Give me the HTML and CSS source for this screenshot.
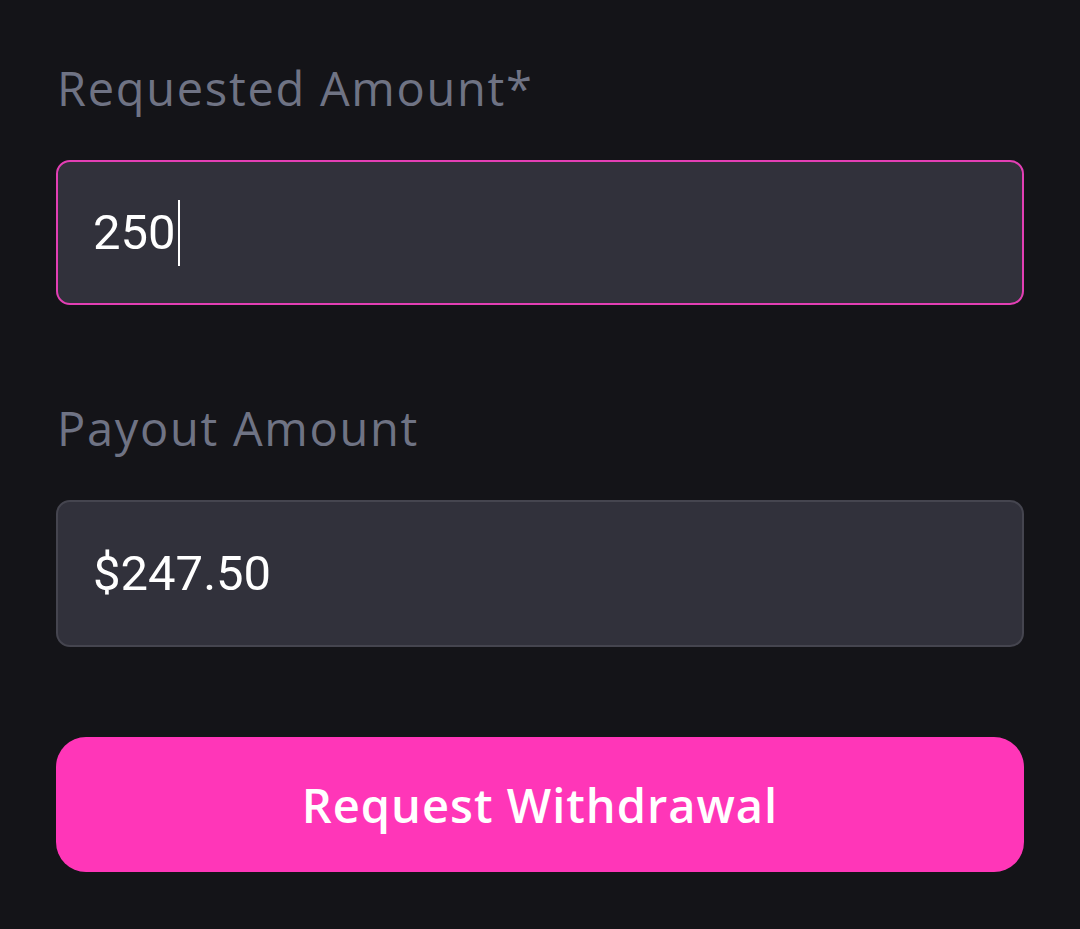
FILE: index.html
```html
<!Doctype html>
<html>
<head>
    <meta charset="UTF-8">
    <title>Withdraw</title>
    <link rel="stylesheet" href="styles.css">
</head>
<body>
<div class="form">
    <div class="label">Requested Amount*</div>
    <div class="field active">
        <span class="value">250</span><span class="caret"></span>
    </div>
    <div class="label second">Payout Amount</div>
    <div class="field">
        <span class="value">$247.50</span>
    </div>
    <div class="btn">Request Withdrawal</div>
</div>
</body>
</html>
```

FILE: styles.css
```css
body{
    margin: 0;
    padding: 0;
    background-color: #141418;
}
.form{
    width: 968px;
    padding: 57px 56px 0;
    display: flex;
    flex-direction: column;
}
.label{
    font-family: "Open Sans", "Liberation Sans", sans-serif;
    font-size: 47px;
    line-height: 63px;
    color: #6f7384;
    padding-left: 1px;
    letter-spacing: 1.7px;
}
.label.second{
    margin-top: 92px;
}
.field{
    margin-top: 40px;
    height: 147px;
    box-sizing: border-box;
    border: 2px solid #45454f;
    border-radius: 14px;
    background-color: #31313b;
    display: flex;
    align-items: center;
    padding-left: 35px;
    font-family: Roboto, "Liberation Sans", sans-serif;
    font-size: 49px;
    color: #fff;
}
.field.active{
    border-color: #e33fb4;
    height: 145px;
}
.caret{
    width: 2px;height: 66px;
    background-color: #fff;
    margin-left: 2px;
}
.btn{
    margin-top: 90px;
    height: 135px;
    border-radius: 30px;
    background-color: #ff36b8;
    color: #fff;
    font-family: "Open Sans", "Liberation Sans", sans-serif;
    font-weight: 600;
    font-size: 47px;
    letter-spacing: 1px;
    display: flex;
    align-items: center;
    justify-content: center;
}
```
